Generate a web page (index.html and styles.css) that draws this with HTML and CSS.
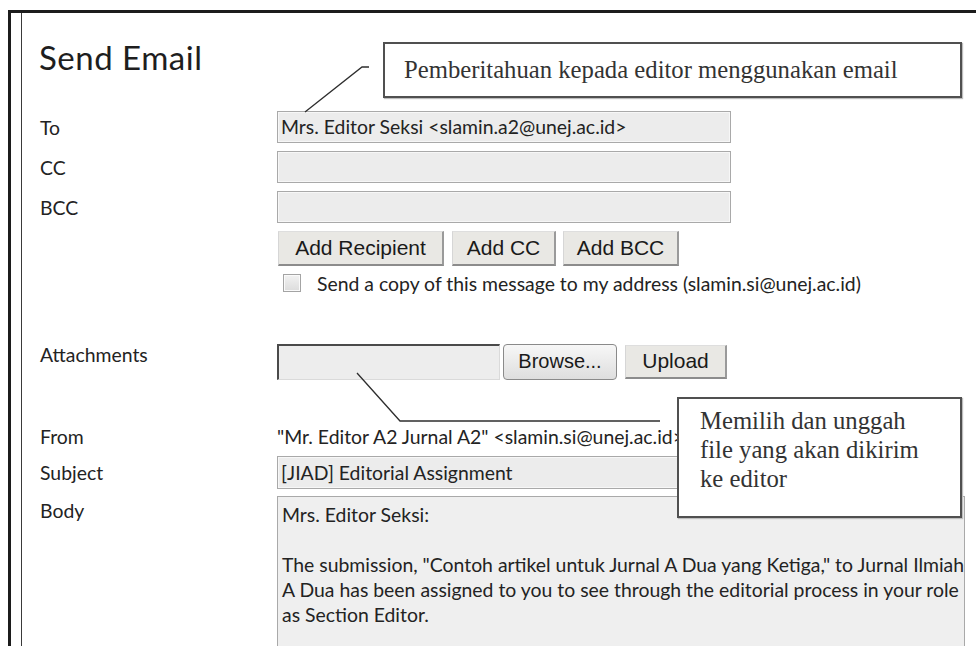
FILE: index.html
```html
<!DOCTYPE html>
<html>
 <head>
  <meta charset="utf-8">
  <title>Send Email</title>
  <link rel="stylesheet" href="styles.css">
 </head>
 <body>
 <div class="frame">
  <div class="sheet">
   <h1 class="title">Send Email</h1>

   <div class="row row-field">
    <span class="label">To</span>
    <div class="field">Mrs. Editor Seksi &lt;slamin.a2@unej.ac.id&gt;</div>
   </div>
   <div class="row row-field">
    <span class="label">CC</span>
    <div class="field"></div>
   </div>
   <div class="row row-field">
    <span class="label">BCC</span>
    <div class="field"></div>
   </div>

   <div class="row row-buttons">
    <button class="btn btn-recipient">Add Recipient</button>
    <button class="btn btn-cc">Add CC</button>
    <button class="btn btn-bcc">Add BCC</button>
   </div>
   <div class="row row-copy">
    <span class="check"></span>
    <span>Send a copy of this message to my address (slamin.si@unej.ac.id)</span>
   </div>

   <div class="row row-attach">
    <span class="label">Attachments</span>
    <div class="file-box"></div>
    <button class="btn-browse">Browse...</button>
    <button class="btn btn-upload">Upload</button>
   </div>

   <div class="row row-from">
    <span class="label">From</span>
    <span class="value">"Mr. Editor A2 Jurnal A2" &lt;slamin.si@unej.ac.id&gt;</span>
   </div>
   <div class="row row-subject">
    <span class="label">Subject</span>
    <div class="field field-subject">[JIAD] Editorial Assignment</div>
   </div>
   <div class="row row-body">
    <span class="label">Body</span>
    <div class="body-box">
     <div class="line">Mrs. Editor Seksi:</div>
     <div class="line">&nbsp;</div>
     <div class="line">The submission, "Contoh artikel untuk Jurnal A Dua yang Ketiga," to Jurnal Ilmiah</div>
     <div class="line">A Dua has been assigned to you to see through the editorial process in your role</div>
     <div class="line">as Section Editor.</div>
     <div class="line">&nbsp;</div>
    </div>
   </div>
  </div>
 </div>

 <!-- annotation layer -->
 <svg class="leaders" width="976" height="646" viewBox="0 0 976 646">
  <polyline points="305,112 362,67 369,67" />
  <polyline points="357,373 400,421 660,421" />
 </svg>
 <div class="callout callout-top">Pemberitahuan kepada editor menggunakan email</div>
 <div class="callout callout-file">Memilih dan unggah<br>file yang akan dikirim<br>ke editor</div>
 </body>
</html>
```

FILE: styles.css
```css
* { box-sizing: border-box; }
body { margin: 0; position: relative; height: 646px; overflow: hidden; background: #fff; color: #232323; font-family: Lato, "Open Sans", sans-serif; font-size: 19.4px; }

.frame { margin: 10px 0 0 8px; height: 636px; border-left: 3px solid #1c1c1c; border-top: 3px solid #1c1c1c; }
.sheet { margin-left: 10px; height: 100%; border-left: 1px solid #3a3a3a; padding-left: 18px; }

.title { margin: 0 0 35px -1px; padding-top: 26px; font-size: 33px; line-height: 37px; font-weight: normal; letter-spacing: 0.5px; color: #1e1e1e; }

.row { display: flex; align-items: center; }
.label { width: 237px; flex: none; }

.row-field { height: 32px; margin-bottom: 8px; }
.field { width: 454px; height: 32px; border: 1px solid #a9a9a9; background: #ececec; box-shadow: inset 0 0 0 1px #f7f7f7; padding: 0 3px; line-height: 30px; white-space: nowrap; overflow: hidden; }

.row-buttons { margin-top: 2px; padding-left: 238px; gap: 8px; height: 35px; }
.btn { height: 35px; padding: 0; font-family: "Liberation Sans", Arial, sans-serif; font-size: 21px; color: #1a1a1a; background: #e9e8e4; border-top: 1px solid #dedede; border-left: 1px solid #d6d6d6; border-right: 2px solid #9a9a9a; border-bottom: 2px solid #8c8c8c; border-radius: 0; }
.btn-recipient { width: 166px; }
.btn-cc { width: 104px; }
.btn-bcc { width: 116px; margin-left: -1px; }

.row-copy { margin-top: 4px; height: 26px; padding-left: 243px; }
.check { width: 18px; height: 18px; margin-right: 16px; border: 1px solid #a4a4a4; background: linear-gradient(#f2f2f2, #dcdcdc); box-shadow: inset 0 0 0 1px #fafafa; }

.row-attach { margin-top: 47px; height: 37px; }
.row-attach .label { align-self: flex-start; line-height: 24px; }
.file-box { width: 223px; height: 36px; background: #ededed; border-top: 2px solid #4a4a4a; border-left: 2px solid #4a4a4a; border-right: 1px solid #dadada; border-bottom: 1px solid #dadada; }
.btn-browse { width: 114px; height: 36px; margin-left: 3px; padding: 0; font-family: "Liberation Sans", Arial, sans-serif; font-size: 20px; color: #1a1a1a; background: linear-gradient(#f7f7f7, #dedede); border: 1px solid #8a8a8a; border-radius: 4px; }
.btn-upload { width: 102px; height: 34px; margin-left: 8px; }

.row-from { margin-top: 46px; height: 20px; }
.value { white-space: nowrap; }

.row-subject { margin-top: 10px; height: 33px; }
.field-subject { height: 33px; line-height: 31px; }

.row-body { margin-top: 7px; align-items: flex-start; }
.row-body .label { line-height: 30px; }
.body-box { width: 688px; border: 1px solid #a9a9a9; background: #efefef; padding: 5px 4px; line-height: 25px; white-space: nowrap; overflow: hidden; }

.leaders { position: absolute; left: 0; top: 0; pointer-events: none; }
.leaders polyline { fill: none; stroke: #2e2e2e; stroke-width: 1.3; }

.callout { position: absolute; background: #fff; border: 2px solid #505050; box-shadow: 1px 1px 1px #bdbdbd; font-family: "Liberation Serif", "Times New Roman", serif; font-size: 24.7px; color: #333; }
.callout-top { left: 383px; top: 42px; width: 579px; height: 56px; padding-left: 19px; line-height: 52px; }
.callout-file { left: 677px; top: 397px; width: 285px; height: 121px; padding: 7px 0 0 21px; line-height: 29px; }
```
